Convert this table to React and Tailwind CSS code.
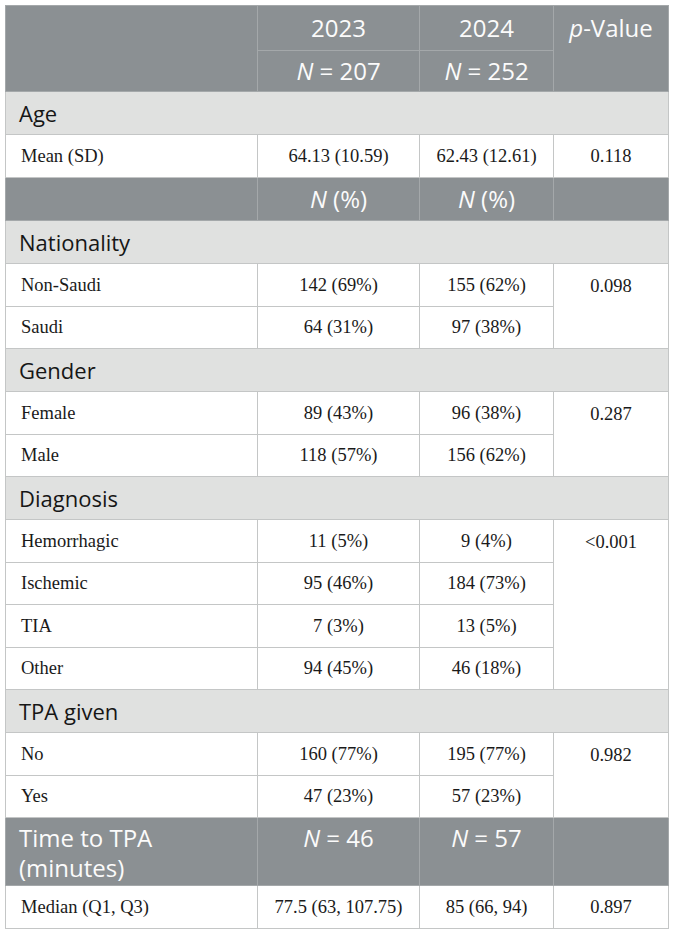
import React from "react";

const HF = { fontFamily: '"Open Sans", "Noto Sans", sans-serif' };

function Header({ children, className = "", lead = "leading-none", ...rest }) {
  return (
    <td
      {...rest}
      className={
        "bg-[#8b9093] border border-[#a4a8aa] text-[#fbfbfb] text-[24px] font-normal " +
        lead +
        " " +
        className
      }
    >
      {children}
    </td>
  );
}

function Section({ label }) {
  return (
    <tr className="h-[43px]">
      <td
        colSpan={4}
        className="bg-[#e0e1e0] border border-[#c4c6c6] pl-[13px] text-[22px] text-[#161616] leading-none font-['Open_Sans',sans-serif]"
      >
        {label}
      </td>
    </tr>
  );
}

function Cell({ children, className = "", ...rest }) {
  return (
    <td
      {...rest}
      className={
        "bg-white border border-[#c4c6c6] text-[18.5px] text-[#1a1a1a] leading-none font-['Liberation_Serif',serif] " +
        className
      }
    >
      {children}
    </td>
  );
}

function DataRows({ rows, p }) {
  return rows.map((r, i) => (
    <tr key={r[0]} className="h-[42.5px]">
      <Cell className="pl-[15px]">{r[0]}</Cell>
      <Cell className="text-center">{r[1]}</Cell>
      <Cell className="text-center">{r[2]}</Cell>
      {i === 0 && (
        <Cell rowSpan={rows.length} className="text-center align-top pt-[13px]">
          {p}
        </Cell>
      )}
    </tr>
  ));
}

export default function App() {
  return (
    <div className="bg-white w-[674px] h-[933px] pt-[5px] pl-[5px]">
      <table className="border-collapse table-fixed w-[663px] border border-[#c9cbcb]">
        <colgroup>
          <col className="w-[252px]" />
          <col className="w-[162px]" />
          <col className="w-[134px]" />
          <col className="w-[115px]" />
        </colgroup>
        <tbody>
          <tr className="h-[45px]">
            <Header rowSpan={2} />
            <Header className="text-center" style={HF}>2023</Header>
            <Header className="text-center" style={HF}>2024</Header>
            <Header rowSpan={2} className="text-center align-top pt-[10px]" style={HF}>
              <i>p</i>-Value
            </Header>
          </tr>
          <tr className="h-[41px]">
            <Header className="text-center" style={HF}>
              <i>N</i> = 207
            </Header>
            <Header className="text-center" style={HF}>
              <i>N</i> = 252
            </Header>
          </tr>
          <Section label="Age" />
          <tr className="h-[43px]">
            <Cell className="pl-[15px]">Mean (SD)</Cell>
            <Cell className="text-center">64.13 (10.59)</Cell>
            <Cell className="text-center">62.43 (12.61)</Cell>
            <Cell className="text-center">0.118</Cell>
          </tr>
          <tr className="h-[43px]">
            <Header />
            <Header className="text-center" style={HF}>
              <i>N</i> (%)
            </Header>
            <Header className="text-center" style={HF}>
              <i>N</i> (%)
            </Header>
            <Header />
          </tr>
          <Section label="Nationality" />
          <DataRows
            rows={[
              ["Non-Saudi", "142 (69%)", "155 (62%)"],
              ["Saudi", "64 (31%)", "97 (38%)"],
            ]}
            p="0.098"
          />
          <Section label="Gender" />
          <DataRows
            rows={[
              ["Female", "89 (43%)", "96 (38%)"],
              ["Male", "118 (57%)", "156 (62%)"],
            ]}
            p="0.287"
          />
          <Section label="Diagnosis" />
          <DataRows
            rows={[
              ["Hemorrhagic", "11 (5%)", "9 (4%)"],
              ["Ischemic", "95 (46%)", "184 (73%)"],
              ["TIA", "7 (3%)", "13 (5%)"],
              ["Other", "94 (45%)", "46 (18%)"],
            ]}
            p="<0.001"
          />
          <Section label="TPA given" />
          <DataRows
            rows={[
              ["No", "160 (77%)", "195 (77%)"],
              ["Yes", "47 (23%)", "57 (23%)"],
            ]}
            p="0.982"
          />
          <tr className="h-[68px]">
            <Header lead="leading-[30px]" className="align-top pl-[13px] pt-[5px]" style={HF}>
              Time to TPA
              <br />
              (minutes)
            </Header>
            <Header lead="leading-[30px]" className="align-top text-center pt-[5px]" style={HF}>
              <i>N</i> = 46
            </Header>
            <Header lead="leading-[30px]" className="align-top text-center pt-[5px]" style={HF}>
              <i>N</i> = 57
            </Header>
            <Header />
          </tr>
          <tr className="h-[43px]">
            <Cell className="pl-[15px]">Median (Q1, Q3)</Cell>
            <Cell className="text-center">77.5 (63, 107.75)</Cell>
            <Cell className="text-center">85 (66, 94)</Cell>
            <Cell className="text-center">0.897</Cell>
          </tr>
        </tbody>
      </table>
    </div>
  );
}
